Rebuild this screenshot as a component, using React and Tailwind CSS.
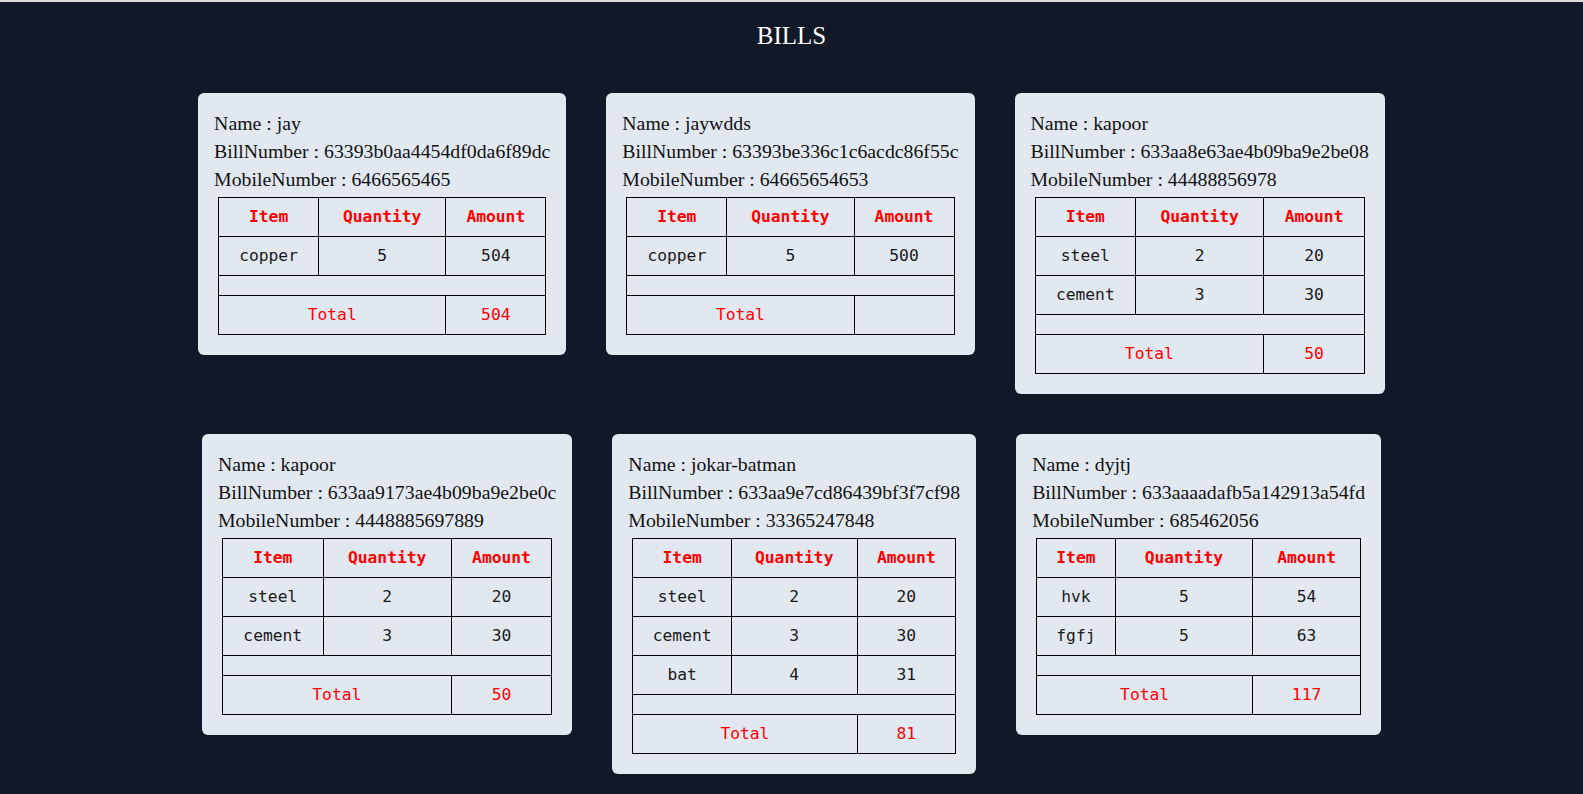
import React from "react";

const bills = [
  { name: "jay", bill: "63393b0aa4454df0da6f89dc", mobile: "6466565465", items: [["copper", "5", "504"]], total: "504" },
  { name: "jaywdds", bill: "63393be336c1c6acdc86f55c", mobile: "64665654653", items: [["copper", "5", "500"]], total: "" },
  { name: "kapoor", bill: "633aa8e63ae4b09ba9e2be08", mobile: "44488856978", items: [["steel", "2", "20"], ["cement", "3", "30"]], total: "50" },
  { name: "kapoor", bill: "633aa9173ae4b09ba9e2be0c", mobile: "4448885697889", items: [["steel", "2", "20"], ["cement", "3", "30"]], total: "50" },
  { name: "jokar-batman", bill: "633aa9e7cd86439bf3f7cf98", mobile: "33365247848", items: [["steel", "2", "20"], ["cement", "3", "30"], ["bat", "4", "31"]], total: "81" },
  { name: "dyjtj", bill: "633aaaadafb5a142913a54fd", mobile: "685462056", items: [["hvk", "5", "54"], ["fgfj", "5", "63"]], total: "117" },
];

const serif = { fontFamily: '"Liberation Serif", "Times New Roman", serif' };
const mono = { fontFamily: '"DejaVu Sans Mono", "Liberation Mono", monospace' };

function Bill({ b }) {
  const cell = "border border-black px-1.5 py-2 leading-[22px] text-center";
  return (
    <div className="m-5 rounded-md bg-[#e2e8f0] p-4 text-[#111]" style={serif}>
      <div className="text-[19.8px] leading-[28px] whitespace-nowrap">Name : {b.name}</div>
      <div className="text-[19.8px] leading-[28px] whitespace-nowrap">BillNumber : {b.bill}</div>
      <div className="text-[19.8px] leading-[28px] whitespace-nowrap">MobileNumber : {b.mobile}</div>
      <div className="p-1">
        <table className="w-full border-collapse text-[16.3px]" style={mono}>
          <thead>
            <tr>
              <th className={cell + " font-bold text-[#ff0000]"}>Item</th>
              <th className={cell + " font-bold text-[#ff0000]"}>Quantity</th>
              <th className={cell + " font-bold text-[#ff0000]"}>Amount</th>
            </tr>
          </thead>
          <tbody>
            {b.items.map((r, i) => (
              <tr key={i}>
                <td className={cell + " text-[#1a1a1a]"}>{r[0]}</td>
                <td className={cell + " text-[#1a1a1a]"}>{r[1]}</td>
                <td className={cell + " text-[#1a1a1a]"}>{r[2]}</td>
              </tr>
            ))}
            <tr>
              <td colSpan={3} className="border border-black p-0 h-[20px]"></td>
            </tr>
            <tr>
              <td colSpan={2} className={cell + " text-[#ff0000]"}>Total</td>
              <td className={cell + " text-[#ff0000]"}>{b.total}</td>
            </tr>
          </tbody>
        </table>
      </div>
    </div>
  );
}

export default function App() {
  return (
    <div className="min-h-screen bg-[#111827] border-t-2 border-[#dcdcdc] pt-[18px]">
      <h1 className="text-center text-[25px] leading-[32px] text-white" style={serif}>BILLS</h1>
      <div className="pt-[21px] flex flex-wrap justify-center items-start">
        {bills.map((b, i) => (
          <Bill key={i} b={b} />
        ))}
      </div>
    </div>
  );
}
